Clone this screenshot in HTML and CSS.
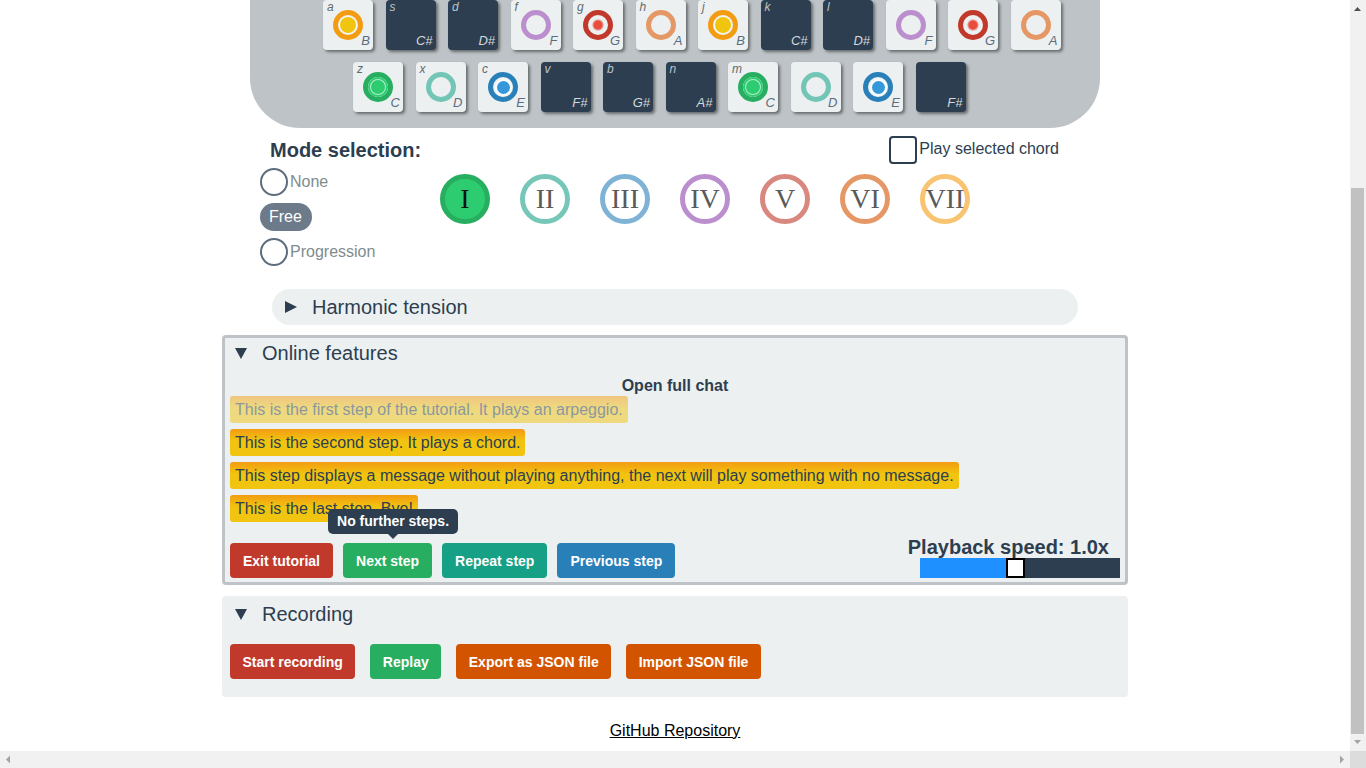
FILE: index.html
```html
<!DOCTYPE html>
<html lang="en">
<head>
<meta charset="utf-8">
<title>Chord keyboard</title>
<link rel="stylesheet" href="styles.css">
</head>
<body>
<div class="window">
<div class="viewport">
<div class="page">
  <div class="keyboard">
    <div class="krow r1">
      <div class="key"><span class="letter">q</span><span class="note">C</span></div>
      <div class="key"><span class="letter">w</span><span class="note">D</span></div>
      <div class="key"><span class="letter">e</span><span class="note">E</span></div>
      <div class="key black"><span class="letter">r</span><span class="note">F#</span></div>
      <div class="key black"><span class="letter">t</span><span class="note">G#</span></div>
      <div class="key black"><span class="letter">y</span><span class="note">A#</span></div>
      <div class="key"><span class="letter">u</span><span class="note">C</span></div>
      <div class="key"><span class="letter">i</span><span class="note">D</span></div>
      <div class="key"><span class="letter">o</span><span class="note">E</span></div>
      <div class="key black"><span class="letter">p</span><span class="note">F#</span></div>
    </div>
    <div class="krow r2">
      <div class="key"><span class="letter">a</span><div class="ring nb"><span class="dot dot-b"></span></div><span class="note">B</span></div>
      <div class="key black"><span class="letter">s</span><span class="note">C#</span></div>
      <div class="key black"><span class="letter">d</span><span class="note">D#</span></div>
      <div class="key"><span class="letter">f</span><div class="ring nf"></div><span class="note">F</span></div>
      <div class="key"><span class="letter">g</span><div class="ring ng"><span class="dot dot-g"></span></div><span class="note">G</span></div>
      <div class="key"><span class="letter">h</span><div class="ring na"></div><span class="note">A</span></div>
      <div class="key"><span class="letter">j</span><div class="ring nb"><span class="dot dot-b"></span></div><span class="note">B</span></div>
      <div class="key black"><span class="letter">k</span><span class="note">C#</span></div>
      <div class="key black"><span class="letter">l</span><span class="note">D#</span></div>
      <div class="key"><div class="ring nf"></div><span class="note">F</span></div>
      <div class="key"><div class="ring ng"><span class="dot dot-g"></span></div><span class="note">G</span></div>
      <div class="key"><div class="ring na"></div><span class="note">A</span></div>
    </div>
    <div class="krow r3">
      <div class="key"><span class="letter">z</span><div class="ring nc"><span class="dot dot-c"></span></div><span class="note">C</span></div>
      <div class="key"><span class="letter">x</span><div class="ring nd"></div><span class="note">D</span></div>
      <div class="key"><span class="letter">c</span><div class="ring ne"><span class="dot dot-e"></span></div><span class="note">E</span></div>
      <div class="key black"><span class="letter">v</span><span class="note">F#</span></div>
      <div class="key black"><span class="letter">b</span><span class="note">G#</span></div>
      <div class="key black"><span class="letter">n</span><span class="note">A#</span></div>
      <div class="key"><span class="letter">m</span><div class="ring nc"><span class="dot dot-c"></span></div><span class="note">C</span></div>
      <div class="key"><div class="ring nd"></div><span class="note">D</span></div>
      <div class="key"><div class="ring ne"><span class="dot dot-e"></span></div><span class="note">E</span></div>
      <div class="key black"><span class="note">F#</span></div>
    </div>
  </div>

  <div class="mode">
    <div class="mode-left">
      <h2 class="mode-title">Mode selection:</h2>
      <label class="radio"><span class="radio-circle"></span>None</label>
      <span class="pill">Free</span>
      <label class="radio"><span class="radio-circle"></span>Progression</label>
    </div>
    <div class="mode-right">
      <label class="chord-toggle"><span class="checkbox"></span>Play selected chord</label>
      <div class="degrees">
        <div class="deg d1 active">I</div>
        <div class="deg d2">II</div>
        <div class="deg d3">III</div>
        <div class="deg d4">IV</div>
        <div class="deg d5">V</div>
        <div class="deg d6">VI</div>
        <div class="deg d7">VII</div>
      </div>
    </div>
  </div>

  <div class="tension">
    <span class="tri-right"></span>
    <span class="section-title">Harmonic tension</span>
  </div>

  <section class="panel online">
    <div class="panel-head"><span class="tri-down"></span><span class="section-title">Online features</span></div>
    <div class="chat-title">Open full chat</div>
    <div class="messages">
      <div class="msg faded">This is the first step of the tutorial. It plays an arpeggio.</div>
      <div class="msg">This is the second step. It plays a chord.</div>
      <div class="msg">This step displays a message without playing anything, the next will play something with no message.</div>
      <div class="msg">This is the last step. Bye!</div>
    </div>
    <div class="controls">
      <div class="btn-row">
        <button class="btn red">Exit tutorial</button>
        <button class="btn green has-tip">Next step<span class="tip">No further steps.</span></button>
        <button class="btn teal">Repeat step</button>
        <button class="btn blue">Previous step</button>
      </div>
      <div class="speed">
        <div class="speed-label">Playback speed: 1.0x</div>
        <div class="slider"><div class="slider-fill" style="width:86px"></div><div class="slider-thumb"></div><div class="slider-rest"></div></div>
      </div>
    </div>
  </section>

  <section class="panel recording">
    <div class="panel-head"><span class="tri-down"></span><span class="section-title">Recording</span></div>
    <div class="btn-row wide">
      <button class="btn red">Start recording</button>
      <button class="btn green">Replay</button>
      <button class="btn orange">Export as JSON file</button>
      <button class="btn orange">Import JSON file</button>
    </div>
  </section>

  <footer class="footer"><a href="#" class="repo">GitHub Repository</a></footer>
</div>
</div>

<div class="vscroll">
  <div class="sb-btn"><svg width="16" height="17" viewBox="0 0 16 17"><polygon points="4,11 7.5,7 11,11" fill="#505050"/></svg></div>
  <div class="vtrack"><div class="vthumb"></div></div>
  <div class="sb-btn"><svg width="16" height="17" viewBox="0 0 16 17"><polygon points="4,6 11,6 7.5,10" fill="#a3a3a3"/></svg></div>
</div>
<div class="hscroll">
  <div class="sb-btn h"><svg width="17" height="17" viewBox="0 0 17 17"><polygon points="10,4.5 10,12.5 6,8.5" fill="#a3a3a3"/></svg></div>
  <div class="htrack"></div>
  <div class="sb-btn h"><svg width="17" height="17" viewBox="0 0 17 17"><polygon points="7,4.5 7,12.5 11,8.5" fill="#a3a3a3"/></svg></div>
</div>
<div class="corner"></div>
</div>
</body>
</html>
```

FILE: styles.css
```css
html, body {
  height: 100%;
}
body {
  margin: 0;
  overflow: hidden;
  font-family: "Liberation Sans", Arial, sans-serif;
  color: #2c3e50;
  background: #fff;
}

/* browser window with scrollbars */
.window {
  display: grid;
  grid-template-columns: 1fr 16px;
  grid-template-rows: 1fr 17px;
  height: 100vh;
}
.viewport {
  min-height: 0;
  overflow: hidden;
  display: flex;
  flex-direction: column;
  justify-content: flex-end;
}
.vscroll {
  display: flex;
  flex-direction: column;
  background: #f1f1f1;
}
.sb-btn {
  height: 17px;
  flex: none;
  display: flex;
}
.sb-btn.h { width: 17px; }
.vtrack {
  flex: 1;
  display: flex;
  flex-direction: column;
  justify-content: flex-end;
  padding-top: 171px;
}
.vthumb {
  flex: 1;
  margin: 0 2px 0 1px;
  background: #c1c1c1;
}
.hscroll {
  display: flex;
  background: #f1f1f1;
}
.htrack { flex: 1; }
.corner { background: #dcdcdc; }

.page {
  flex: none;
  width: 906px;
  margin: 0 auto;
}

/* keyboard */
.keyboard {
  width: 850px;
  margin: 0 auto;
  background: #bdc3c7;
  border-radius: 0 0 50px 50px;
  padding: 30px 0 16px;
  box-sizing: border-box;
  display: flex;
  flex-direction: column;
  gap: 12px;
}
.krow {
  display: flex;
  gap: 12.5px;
}
.r1 { padding-left: 43px; }
.r2 { padding-left: 73px; }
.r3 { padding-left: 103px; }
.key {
  position: relative;
  flex: none;
  width: 50px;
  height: 50px;
  border-radius: 4px;
  background: #ecf0f1;
  box-shadow: 2px 2px 3px rgba(0, 0, 0, 0.45);
  display: flex;
  align-items: center;
  justify-content: center;
}
.key.black { background: #2c3e50; }
.letter {
  position: absolute;
  top: 0;
  left: 4px;
  font-size: 12px;
  font-style: italic;
  color: #5f6b6d;
}
.note {
  position: absolute;
  right: 3px;
  bottom: 2px;
  font-size: 13px;
  font-style: italic;
  color: #5d6d7e;
}
.black .letter { color: #bdc3c7; }
.black .note { color: #d5d8dc; }
.ring {
  width: 30px;
  height: 30px;
  box-sizing: border-box;
  border: 5px solid;
  border-radius: 50%;
  display: flex;
  align-items: center;
  justify-content: center;
}
.nc { border-color: #27ae60; }
.nd { border-color: #73c6b6; }
.ne { border-color: #2980b9; }
.nf { border-color: #bb8fce; }
.ng { border-color: #c0392b; }
.na { border-color: #e59866; }
.nb { border-color: #f39c12; }
.dot { display: block; border-radius: 50%; flex: none; }
.dot-b {
  width: 16px;
  height: 16px;
  background: #f1c40f;
  box-shadow: 0 0 1px 1px rgba(255, 255, 255, 0.7);
}
.dot-c {
  width: 20px;
  height: 20px;
  background: #2ecc71;
  box-shadow: inset 0 0 0 2px #2ecc71, inset 0 0 0 3px rgba(255, 255, 255, 0.65);
}
.dot-e {
  width: 13px;
  height: 13px;
  background: #3498db;
  box-shadow: 0 0 2px 2px #fff;
}
.dot-g {
  width: 12px;
  height: 12px;
  background: radial-gradient(circle, #e74c3c 45%, rgba(231, 76, 60, 0) 75%);
}

/* mode */
.mode {
  display: flex;
  margin-top: 7px;
  padding-left: 38px;
}
.mode-left {
  width: 180px;
  display: flex;
  flex-direction: column;
  align-items: flex-start;
  gap: 7px;
}
.mode-title {
  margin: 4px 0 -1px 10px;
  font-size: 20px;
  line-height: 23px;
  font-weight: bold;
}
.radio {
  display: flex;
  align-items: center;
  height: 28px;
  font-size: 16px;
  color: #7f8c8d;
}
.radio-circle {
  width: 28px;
  height: 28px;
  box-sizing: border-box;
  border: 2px solid #5d6d7e;
  border-radius: 50%;
  margin-right: 2px;
}
.pill {
  height: 28px;
  line-height: 28px;
  padding: 0 10px 0 9px;
  border-radius: 14px;
  background: #6c7a89;
  color: #fff;
  font-size: 16px;
}
.mode-right {
  flex: 1;
  display: flex;
  flex-direction: column;
}
.chord-toggle {
  align-self: flex-end;
  margin-right: 69px;
  display: flex;
  align-items: center;
  height: 28px;
  font-size: 16px;
  color: #2c3e50;
}
.checkbox {
  width: 28px;
  height: 28px;
  box-sizing: border-box;
  border: 2px solid #2c3e50;
  border-radius: 4px;
  margin-right: 2px;
  margin-top: 2px;
}
.degrees {
  display: flex;
  gap: 30px;
  margin-top: 11px;
}
.deg {
  width: 50px;
  height: 50px;
  box-sizing: border-box;
  border: 5px solid;
  border-radius: 50%;
  display: flex;
  align-items: center;
  justify-content: center;
  font-family: "Liberation Serif", "Times New Roman", serif;
  font-size: 28px;
  color: #5a5a5a;
  white-space: nowrap;
}
.deg.active { background: #2ecc71; color: #111; }
.d1 { border-color: #27ae60; }
.d2 { border-color: #76c7b7; }
.d3 { border-color: #7fb3d5; }
.d4 { border-color: #bb8fce; }
.d5 { border-color: #d98880; }
.d6 { border-color: #e59866; }
.d7 { border-color: #f8c471; }

/* tension */
.tension {
  margin: 23px 50px 0;
  height: 36px;
  border-radius: 18px;
  background: #ecf0f1;
  display: flex;
  align-items: center;
  padding-left: 13px;
}
.tri-right {
  width: 0;
  height: 0;
  border-left: 12px solid #2c3e50;
  border-top: 6.5px solid transparent;
  border-bottom: 6.5px solid transparent;
  margin-right: 15px;
}
.tri-down {
  width: 0;
  height: 0;
  border-top: 11px solid #2c3e50;
  border-left: 6.5px solid transparent;
  border-right: 6.5px solid transparent;
  margin-right: 15px;
}
.section-title {
  font-size: 20px;
  color: #2c3e50;
}

/* panels */
.panel {
  background: #ecf0f1;
  border: 3px solid #bdc3c7;
  border-radius: 4px;
  margin-top: 10px;
}
.panel.recording {
  border-color: #ecf0f1;
  margin-top: 11px;
}
.panel-head {
  display: flex;
  align-items: center;
  height: 24px;
  padding: 3px 10px 0;
}
.chat-title {
  margin-top: 12px;
  text-align: center;
  font-weight: bold;
  font-size: 16px;
  line-height: 18px;
}
.messages {
  display: flex;
  flex-direction: column;
  align-items: flex-start;
  gap: 6px;
  padding: 1px 5px 0;
}
.msg {
  font-size: 16px;
  line-height: 19px;
  padding: 4px 5px;
  border-radius: 3px;
  color: #2c3e50;
  background: linear-gradient(to bottom, #f39c12 0%, #f1c40f 45%, #f1c40f 100%);
}
.msg.faded { opacity: 0.5; }
.controls {
  display: flex;
  justify-content: space-between;
  align-items: flex-end;
  padding: 0 5px 4px;
  margin-top: 14px;
}
.btn-row {
  display: flex;
  gap: 10px;
}
.btn-row.wide {
  gap: 15px;
  padding: 18px 5px 15px;
}
.btn {
  height: 35px;
  padding: 0 13px;
  border: none;
  border-radius: 4px;
  font-family: "Liberation Sans", Arial, sans-serif;
  font-size: 14px;
  font-weight: bold;
  color: #fff;
}
.btn-row.wide .btn { padding: 0 12.5px; }
.red { background: #c0392b; }
.green { background: #27ae60; }
.teal { background: #16a085; }
.blue { background: #2980b9; }
.orange { background: #d35400; }
.has-tip { position: relative; }
.tip {
  position: absolute;
  left: -15px;
  bottom: calc(100% + 9px);
  height: 25px;
  line-height: 25px;
  padding: 0 9px;
  border-radius: 5px;
  background: #2c3e50;
  color: #fff;
  font-size: 14px;
  font-weight: bold;
  white-space: nowrap;
}
.tip::after {
  content: "";
  position: absolute;
  left: 60px;
  top: 100%;
  border-top: 5px solid #2c3e50;
  border-left: 5px solid transparent;
  border-right: 5px solid transparent;
}
.speed {
  display: flex;
  flex-direction: column;
  align-items: flex-end;
}
.speed-label {
  font-size: 20px;
  font-weight: bold;
  line-height: 22px;
  margin-right: 11px;
}
.slider {
  width: 200px;
  height: 20px;
  display: flex;
}
.slider-fill { background: #1e90ff; }
.slider-thumb {
  width: 19px;
  box-sizing: border-box;
  border: 2px solid #000;
  background: #fff;
}
.slider-rest { flex: 1; background: #2c3e50; }

/* footer */
.footer {
  text-align: center;
  padding: 25px 0 11px;
  font-size: 16px;
  line-height: 18px;
}
.repo { color: #000; }
```
